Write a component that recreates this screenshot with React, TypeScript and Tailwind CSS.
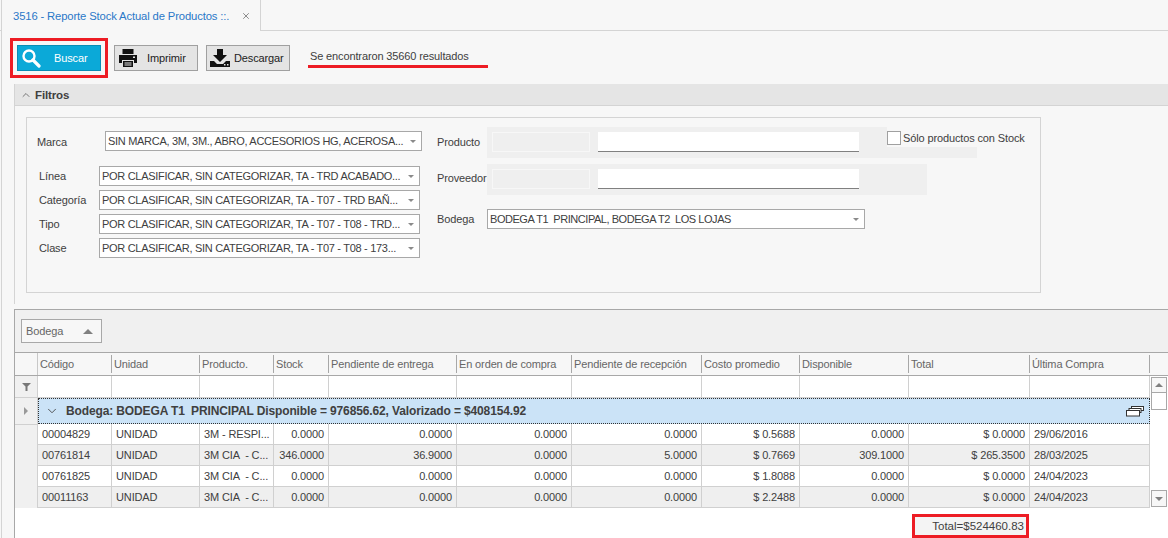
import { ChevronDown, ChevronUp, X } from 'lucide-react'

const columns = '74px 88px 74px 55px 128px 115px 130px 98px 109px 121px 120px'

const headers = ['Código', 'Unidad', 'Producto.', 'Stock', 'Pendiente de entrega', 'En orden de compra', 'Pendiente de recepción', 'Costo promedio', 'Disponible', 'Total', 'Última Compra']

const rows = [
  ['00004829', 'UNIDAD', '3M - RESPI...', '0.0000', '0.0000', '0.0000', '0.0000', '$ 0.5688', '0.0000', '$ 0.0000', '29/06/2016'],
  ['00761814', 'UNIDAD', '3M CIA  - C...', '346.0000', '36.9000', '0.0000', '5.0000', '$ 0.7669', '309.1000', '$ 265.3500', '28/03/2025'],
  ['00761825', 'UNIDAD', '3M CIA  - C...', '0.0000', '0.0000', '0.0000', '0.0000', '$ 1.8088', '0.0000', '$ 0.0000', '24/04/2023'],
  ['00011163', 'UNIDAD', '3M CIA  - C...', '0.0000', '0.0000', '0.0000', '0.0000', '$ 2.2488', '0.0000', '$ 0.0000', '24/04/2023'],
]

function Combo({ text, width }: { text: string; width: string }) {
  return (
    <div className={`flex h-5 items-center justify-between border border-[#a8a8a8] bg-white pl-[2px] pr-[5px] ${width}`}>
      <span className="whitespace-pre">{text}</span>
      <span className="h-0 w-0 border-x-[3px] border-t-[3px] border-x-transparent border-t-[#8a8a8a]" />
    </div>
  )
}

function LookupPanel({ width, children }: { width: string; children?: React.ReactNode }) {
  return (
    <div className={`flex h-[31px] items-start bg-[#efefef] pl-[5px] pt-[5px] ${width}`}>
      <div className="h-5 w-[98px] border border-[#f7f7f7] bg-[#efefef]" />
      <div className="ml-2 h-5 w-[261px] border-b border-b-[#808080] bg-white" />
      {children}
    </div>
  )
}

function SearchIcon() {
  return (
    <svg width="20" height="20" viewBox="0 0 20 20" fill="none" stroke="white">
      <circle cx="8" cy="8" r="5.500" strokeWidth="2.400" />
      <path d="M12 12l6 6" strokeWidth="3.200" strokeLinecap="round" />
    </svg>
  )
}

function PrinterIcon() {
  return (
    <svg width="20" height="20" viewBox="0 0 20 20" fill="#111">
      <path d="M4.500 1h11v5h-11z" />
      <path d="M1 7h18v8h-3v-3H4v3H1z" />
      <path d="M5 13h10v6H5zM6.500 14.500v1h7v-1zM6.500 16.500v1h7v-1z" fillRule="evenodd" />
      <rect x="15" y="8.500" width="2" height="1.500" fill="#e4e4e4" />
    </svg>
  )
}

function DownloadIcon() {
  return (
    <svg width="22" height="20" viewBox="0 0 22 20" fill="#111">
      <path d="M8 1h6v6h4l-7 7-7-7h4z" />
      <path d="M1 13h4l3 3h6l3-3h4v6H1z" />
      <rect x="15" y="16" width="1.500" height="1.500" fill="#e4e4e4" />
      <rect x="18" y="16" width="1.500" height="1.500" fill="#e4e4e4" />
    </svg>
  )
}

function GroupIcon() {
  return (
    <svg width="18" height="11" viewBox="0 0 18 11" fill="white" stroke="#333">
      <rect x="5.500" y="0.500" width="12" height="4" />
      <rect x="3" y="2.500" width="12" height="4" />
      <rect x="0.500" y="4.500" width="13" height="5.500" />
    </svg>
  )
}

export default function App() {
  return (
    <div className="h-[538px] w-[1168px] overflow-hidden bg-[#f7f7f7] font-['Liberation_Sans',sans-serif] text-[11px] leading-[14px] tracking-[-0.13px] text-[#404040]">
      <div className="flex h-[31px] border-b border-[#d4d4d4] pl-px">
        <div className="-mb-px flex h-[31px] w-[260px] items-center justify-between border-x border-[#d4d4d4] bg-[#f7f7f7] pl-[11px] pr-[9px]">
          <span className="whitespace-nowrap text-[11.25px] text-[#2a78c8]">3516 - Reporte Stock Actual de Productos ::.</span>
          <X size={10} strokeWidth={2} className="text-[#777]" />
        </div>
      </div>

      <div className="ml-px h-[507px] border-l border-[#d4d4d4]">
        <div className="flex h-[53px] items-start pl-2 pt-[7px]">
          <div className="border-[3px] border-[#ed1c24] p-[4px]">
            <button type="button" className="flex h-[26px] w-[84px] items-center border border-[#0a8db5] bg-[#0ba9d8] pl-[3px] text-white">
              <SearchIcon />
              <span className="ml-[13px]">Buscar</span>
            </button>
          </div>
          <button type="button" className="ml-[6px] mt-[7px] flex h-[26px] w-[84px] items-center border border-[#a0a0a0] bg-[#e4e4e4] pl-[3px] text-[#222]">
            <PrinterIcon />
            <span className="ml-[9px]">Imprimir</span>
          </button>
          <button type="button" className="ml-2 mt-[7px] flex h-[26px] w-[84px] items-center border border-[#a0a0a0] bg-[#e4e4e4] pl-[2px] text-[#222]">
            <DownloadIcon />
            <span className="ml-[3px]">Descargar</span>
          </button>
          <div className="ml-[18px] mt-[4px] w-[180px] border-b-[3px] border-[#ed1c24] pb-[2px] pl-[2px] pt-[7px]">Se encontraron 35660 resultados</div>
        </div>

        <div className="ml-3 h-[220px] border-l border-[#d4d4d4]">
          <div className="flex h-[22px] items-center gap-[3px] border-b border-[#d4d4d4] bg-[#e5e5e5] pl-[5px] pt-[1px] font-bold">
            <ChevronUp size={12} className="text-[#777]" />
            <span className="text-[11.5px]">Filtros</span>
          </div>
          <div className="ml-[11px] mt-[11px] flex h-[176px] w-[1015px] border border-[#d4d4d4] bg-[#f7f7f7]">
            <div className="w-[410px] pt-[13px] tracking-[-0.3px]">
              <div className="flex items-center pl-[10px]">
                <span className="w-[68px] pt-[2px] tracking-[-0.13px]">Marca</span>
                <Combo text="SIN MARCA, 3M, 3M., ABRO, ACCESORIOS HG, ACEROSA..." width="w-[317px]" />
              </div>
              <div className="mt-[15px] flex flex-col gap-1 pl-3">
                {[
                  ['Línea', 'POR CLASIFICAR, SIN CATEGORIZAR, TA - TRD ACABADO...'],
                  ['Categoría', 'POR CLASIFICAR, SIN CATEGORIZAR, TA - T07 - TRD BAÑ...'],
                  ['Tipo', 'POR CLASIFICAR, SIN CATEGORIZAR, TA - T07 - T08 - TRD...'],
                  ['Clase', 'POR CLASIFICAR, SIN CATEGORIZAR, TA - T07 - T08 - 173...'],
                ].map(([label, text]) => (
                  <div key={label} className="flex items-center">
                    <span className="w-[60px] tracking-[-0.13px]">{label}</span>
                    <Combo text={text} width="w-[321px]" />
                  </div>
                ))}
              </div>
            </div>
            <div className="pt-[9px]">
              <div className="flex items-center">
                <span className="-mt-[1px] w-[50px]">Producto</span>
                <LookupPanel width="w-[490px]">
                  <div className="-mt-[5px] ml-7 flex h-5 w-[90px] items-start bg-[#f7f7f7] pt-[4px]">
                    <span className="h-[14px] w-[14px] shrink-0 border border-[#a0a0a0] bg-white" />
                    <span className="ml-[2px] whitespace-nowrap">Sólo productos con Stock</span>
                  </div>
                </LookupPanel>
              </div>
              <div className="mt-[6px] flex items-center">
                <span className="-mt-[3px] w-[50px]">Proveedor</span>
                <LookupPanel width="w-[440px]" />
              </div>
              <div className="mt-[14px] flex items-center">
                <span className="w-[50px]">Bodega</span>
                <Combo text="BODEGA T1  PRINCIPAL, BODEGA T2  LOS LOJAS" width="w-[378px] tracking-[-0.45px]" />
              </div>
            </div>
          </div>
        </div>

        <div className="ml-3 mt-[5px] h-[229px] border-l border-t border-[#a8a8a8] bg-white">
          <div className="flex h-[43px] items-center border-b border-[#a8a8a8] bg-[#f0f0f0] pl-[6px]">
            <div className="flex h-6 w-[81px] items-center justify-between border border-[#a8a8a8] bg-[#f7f7f7] pl-1 pr-2 text-[#666]">
              <span>Bodega</span>
              <span className="h-0 w-0 border-x-[5px] border-b-[5px] border-x-transparent border-b-[#808080]" />
            </div>
          </div>

          <div className="flex h-[23px] border-b border-[#a8a8a8] bg-[#f7f7f7] text-[#666]">
            <div className="w-[23px] shrink-0 border-r border-[#c8c8c8]" />
            <div className="grid flex-1" style={{ gridTemplateColumns: columns }}>
              {headers.map(h => (
                <div key={h} className="my-[2px] flex items-center whitespace-nowrap border-r border-[#a8a8a8] pl-[2px]">{h}</div>
              ))}
            </div>
          </div>

          <div className="flex">
            <div className="w-[1135px]">
              <div className="flex">
                <div className="flex w-[23px] shrink-0 flex-col border-r border-[#d0d0d0] bg-[#f0f0f0]">
                  <div className="flex h-[22px] items-center justify-center border-b border-[#d0d0d0]">
                    <svg width="9" height="9" viewBox="0 0 9 9" fill="#777"><path d="M0 1h9L5.500 4.500V9h-2V4.500z" /></svg>
                  </div>
                  <div className="flex h-[26px] items-center justify-center">
                    <span className="h-0 w-0 border-y-[4px] border-l-[4px] border-y-transparent border-l-[#999]" />
                  </div>
                  <div className="h-[84px] border-t border-[#d0d0d0]" />
                </div>
                <div className="flex-1">
                  <div className="grid h-[22px] border-b border-[#d0d0d0]" style={{ gridTemplateColumns: columns }}>
                    {headers.map(h => <div key={h} className="border-r border-[#d0d0d0]" />)}
                  </div>
                  <div className="flex h-[26px] items-center justify-between border border-dotted border-[#333] bg-[#cbe3f7] pl-[6px] pr-[5px] text-xs font-bold">
                    <div className="flex items-center gap-[7px]">
                      <ChevronDown size={14} strokeWidth={1.5} />
                      <span className="whitespace-pre">Bodega: BODEGA T1  PRINCIPAL Disponible = 976856.62, Valorizado = $408154.92</span>
                    </div>
                    <GroupIcon />
                  </div>
                  {rows.map((row, r) => (
                    <div key={r} className={`grid h-[21px] border-b border-[#d0d0d0] ${r % 2 ? 'bg-[#efefef]' : 'bg-white'}`} style={{ gridTemplateColumns: columns }}>
                      {row.map((cell, c) => (
                        <div key={c} className={`flex items-center overflow-hidden whitespace-pre border-r border-[#d0d0d0] px-1 ${c > 2 && c < 10 ? 'justify-end' : ''}`}>{cell}</div>
                      ))}
                    </div>
                  ))}
                </div>
              </div>
            </div>
            <div className="ml-px flex h-[131px] w-4 flex-col justify-between pt-px">
              <div>
                <div className="flex h-[16px] items-center justify-center border border-[#a8a8a8] bg-[#f7f7f7]">
                  <span className="h-0 w-0 border-x-[4px] border-b-[4px] border-x-transparent border-b-[#808080]" />
                </div>
                <div className="h-[17px] border border-t-0 border-[#a8a8a8] bg-white" />
              </div>
              <div className="flex h-[17px] items-center justify-center border border-[#a8a8a8] bg-[#f7f7f7]">
                <span className="h-0 w-0 border-x-[4px] border-t-[4px] border-x-transparent border-t-[#808080]" />
              </div>
            </div>
          </div>

          <div className="ml-[897px] mt-[6px] flex h-[24px] w-[117px] items-center justify-end border-[3px] border-[#ed1c24] bg-[#f4f4f4] pr-[2px] text-[11.5px] tracking-normal">
            Total=$524460.83
          </div>
        </div>
      </div>
    </div>
  )
}
